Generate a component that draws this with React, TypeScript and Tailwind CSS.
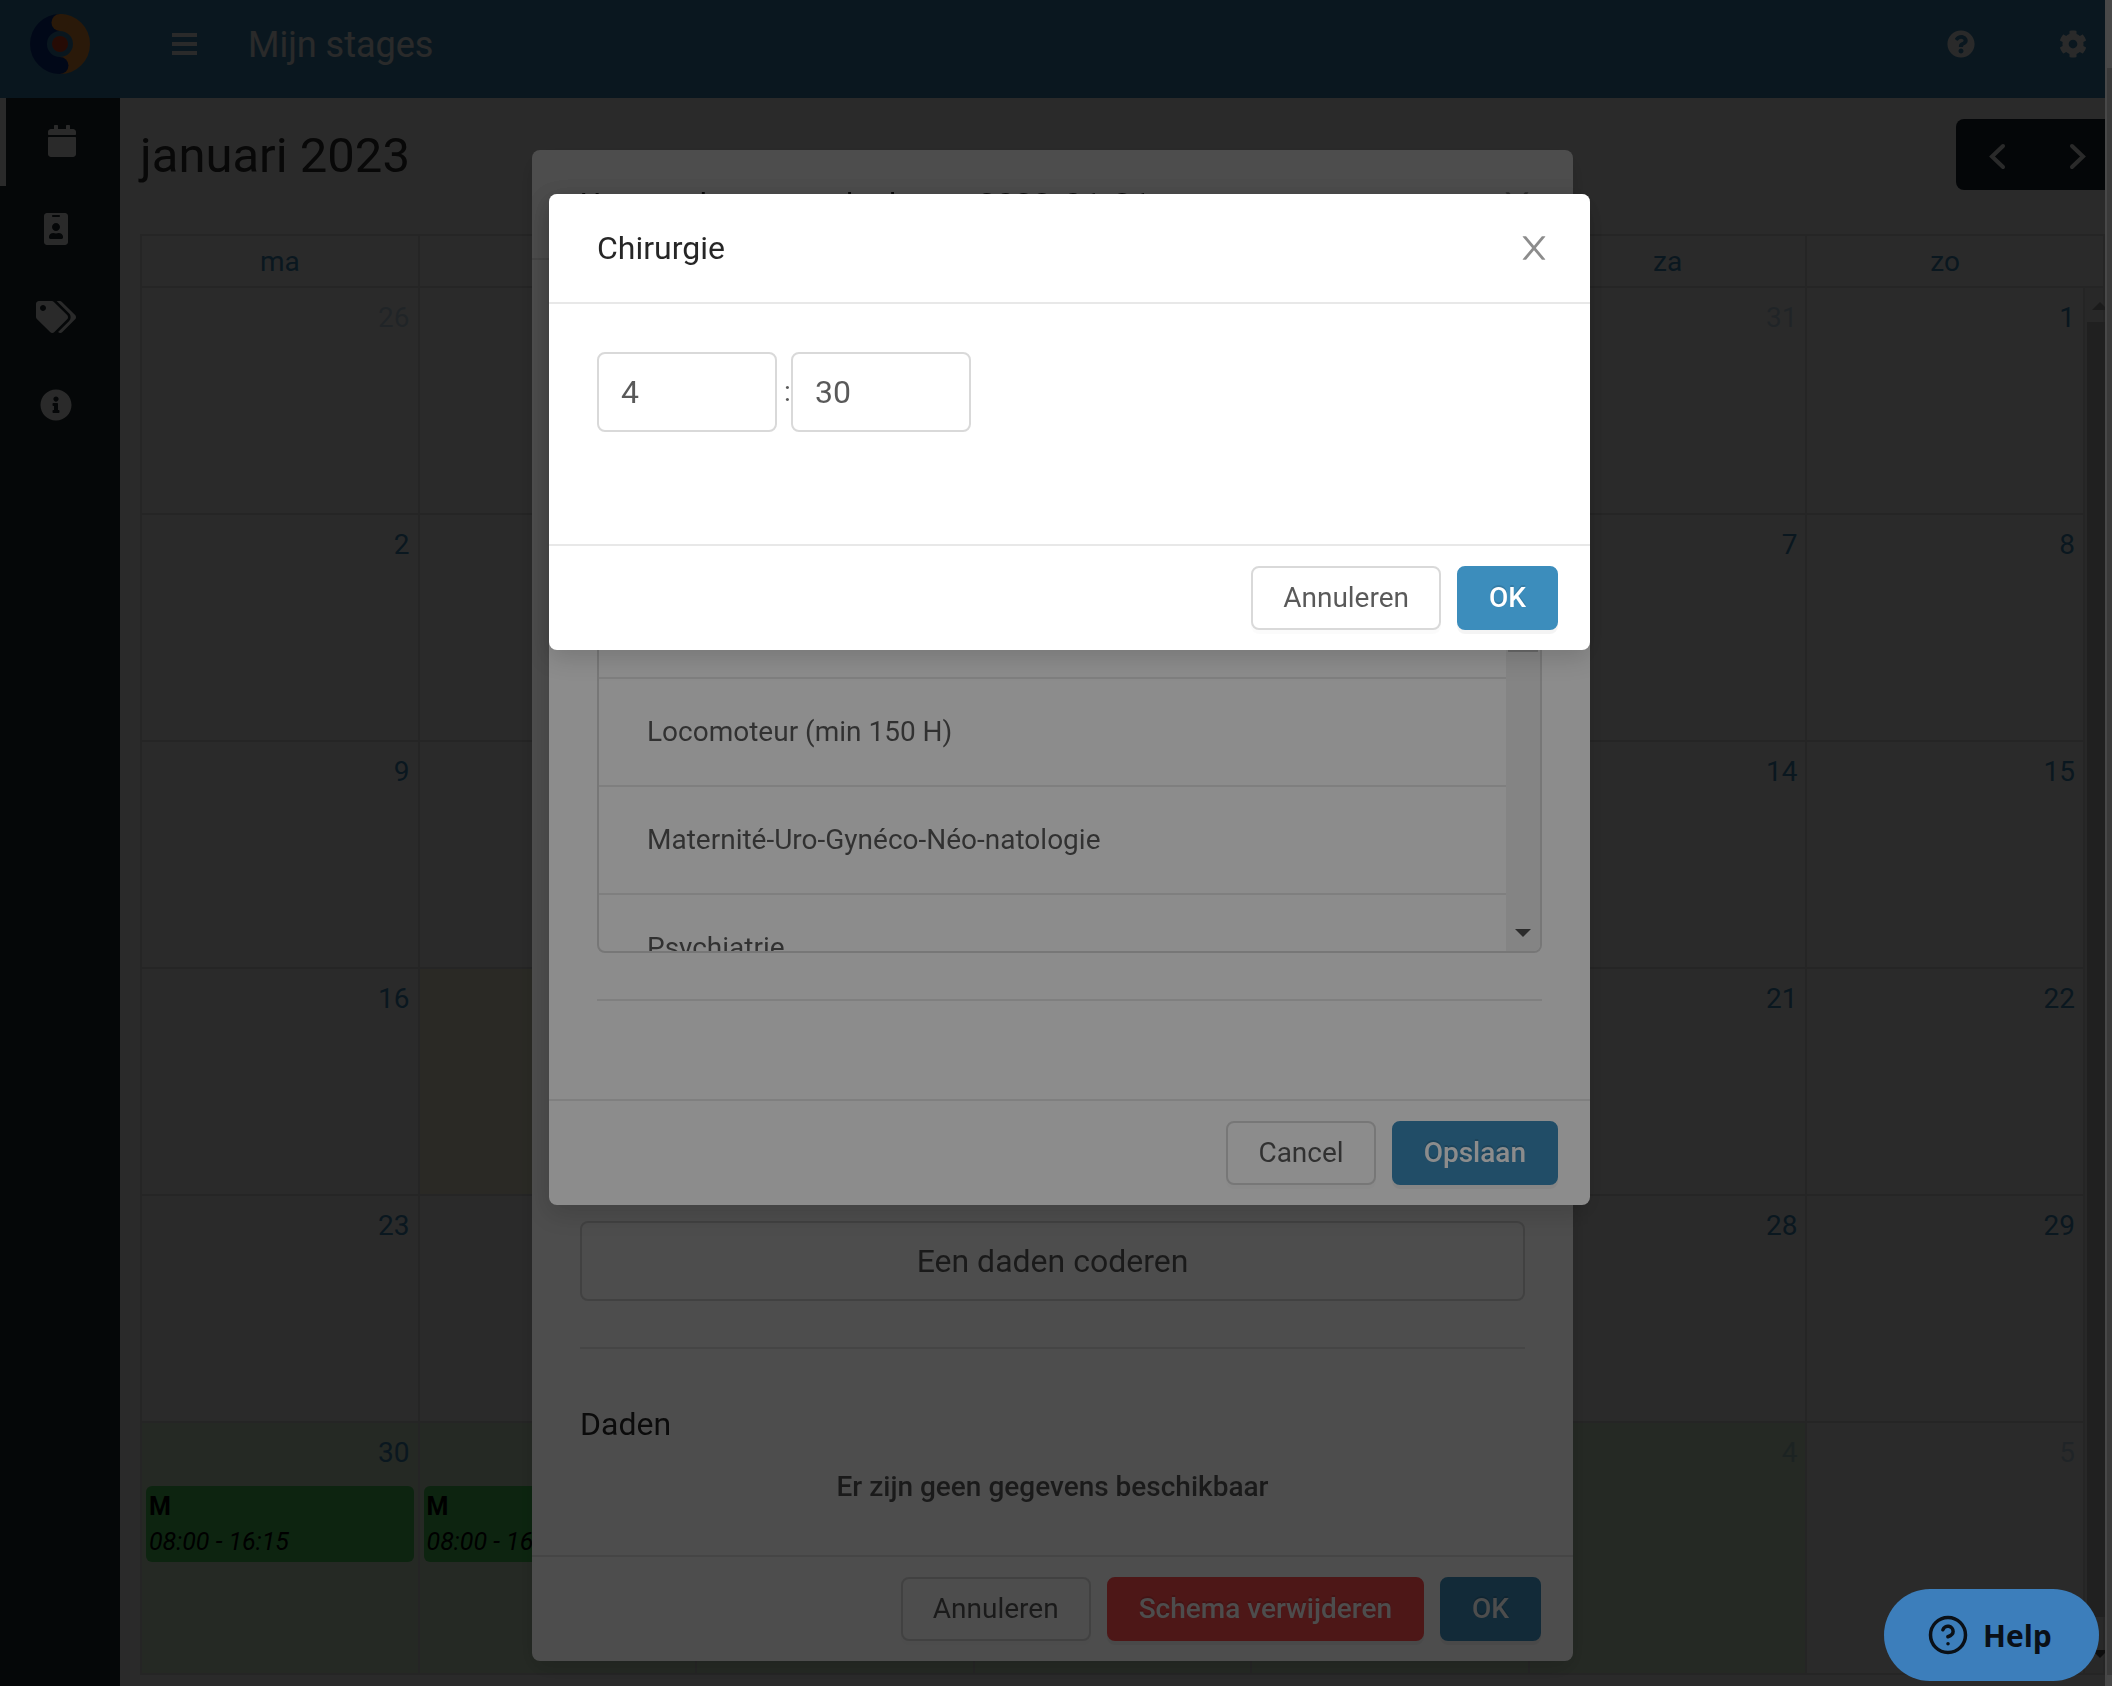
import React, { useState } from 'react';
import { FaCalendar, FaIdBadge, FaTags, FaInfoCircle, FaQuestionCircle, FaCog } from 'react-icons/fa';
import { HelpCircle } from 'lucide-react';

const weekDays = ['ma', 'di', 'wo', 'do', 'vr', 'za', 'zo'];

const weeks = [
  [26, 27, 28, 29, 30, 31, 1],
  [2, 3, 4, 5, 6, 7, 8],
  [9, 10, 11, 12, 13, 14, 15],
  [16, 17, 18, 19, 20, 21, 22],
  [23, 24, 25, 26, 27, 28, 29],
  [30, 31, 1, 2, 3, 4, 5],
];

const courses = ['Chirurgie', 'Gériatrie', 'Médecine', 'Locomoteur (min 150 H)', 'Maternité-Uro-Gynéco-Néo-natologie', 'Psychiatrie'];

const isOtherMonth = (week: number, day: number) =>
  (week === 0 && day < 6) || (week === 5 && day > 1);

const cellBackground = (week: number, day: number) => {
  if (week === 5 && day < 6) return 'bg-[#ddf5d9]';
  if (week === 3 && day === 1) return 'bg-[#fffadf]';
  return '';
};

const CloseIcon = () => (
  <svg viewBox="64 64 896 896" className="size-8" fill="currentColor" aria-hidden="true">
    <path d="M563.8 512l262.5-312.9c4.4-5.2.7-13.1-6.1-13.1h-79.8c-4.7 0-9.2 2.1-12.3 5.7L511.6 449.8 295.1 191.7c-3-3.6-7.5-5.7-12.3-5.7H203c-6.8 0-10.5 7.9-6.1 13.1L459.4 512 196.9 824.9A7.95 7.95 0 0 0 203 838h79.8c4.7 0 9.2-2.1 12.3-5.7l216.5-258.1 216.5 258.1c3 3.6 7.5 5.7 12.3 5.7h79.8c6.8 0 10.5-7.9 6.1-13.1L563.8 512z" />
  </svg>
);

const Logo = () => (
  <svg viewBox="0 0 60 60" className="size-[60px]" fill="none" aria-hidden="true">
    <path d="M30 8.500 A21.500 21.500 0 0 0 30 51.500" stroke="#0b3590" strokeWidth="17" />
    <path d="M30 8.500 A21.500 21.500 0 0 1 30 51.500" stroke="#ff9636" strokeWidth="17" />
    <circle cx="30" cy="8.500" r="8.500" fill="#ff9636" />
    <circle cx="30" cy="51.500" r="8.500" fill="#0b3590" />
    <circle cx="30" cy="30" r="8" fill="#e8451f" />
  </svg>
);

const MenuIcon = () => (
  <svg viewBox="0 0 25 22" className="h-[22px] w-[25px]" fill="currentColor" aria-hidden="true">
    <rect width="25" height="4" />
    <rect y="9" width="25" height="4" />
    <rect y="18" width="25" height="4" />
  </svg>
);

type ButtonProps = { children: React.ReactNode; variant?: 'default' | 'primary' | 'danger' };

const DialogButton = ({ children, variant = 'default' }: ButtonProps) => {
  const base = 'h-16 rounded-lg border-2 px-[30px] text-[28px] leading-[42px]';
  const styles = {
    default: 'border-[#d9d9d9] bg-white text-black/65 shadow-[0_4px_0_rgba(0,0,0,0.015)]',
    primary: 'border-[#3c8dbc] bg-[#3c8dbc] font-medium text-white shadow-[0_4px_0_rgba(0,0,0,0.045)] [text-shadow:0_-2px_0_rgba(0,0,0,0.12)]',
    danger: 'border-[#ff4d4f] bg-[#ff4d4f] font-medium text-white shadow-[0_4px_0_rgba(0,0,0,0.045)] [text-shadow:0_-2px_0_rgba(0,0,0,0.12)]',
  };
  return <button type="button" className={`${base} ${styles[variant]}`}>{children}</button>;
};

type DialogProps = {
  title: React.ReactNode;
  label: string;
  wrapClass: string;
  bodyClass?: string;
  footer: React.ReactNode;
  scrollbar?: boolean;
  children: React.ReactNode;
};

const Dialog = ({ title, label, wrapClass, bodyClass = '', footer, scrollbar = false, children }: DialogProps) => (
  <div className="fixed inset-0 flex overflow-hidden bg-black/45">
    <div className={`flex grow items-start justify-center ${wrapClass}`}>
      <section role="dialog" aria-label={label} className="w-[1041px] max-w-full rounded-lg bg-white shadow-[0_8px_24px_rgba(0,0,0,0.15)]">
        <header className="flex items-center justify-between border-b-2 border-[#e8e8e8] py-8 pl-12 pr-10">
          <h2 className="text-[32px] leading-[44px] text-black/85">{title}</h2>
          <button type="button" aria-label="Sluiten" className="text-black/45">
            <CloseIcon />
          </button>
        </header>
        <div className={`p-12 ${bodyClass}`}>{children}</div>
        <footer className="flex justify-end gap-4 border-t-2 border-[#e8e8e8] px-8 py-5">{footer}</footer>
      </section>
    </div>
    <div className="w-[7px] shrink-0">
      {scrollbar && (
        <div className="flex h-full bg-[#f1f1f1] pt-[68px] pb-[11px] pl-0.5">
          <div className="grow bg-[#c1c1c1]" />
        </div>
      )}
    </div>
  </div>
);

const Sidebar = () => (
  <aside className="flex w-[120px] shrink-0 flex-col bg-[#222d32]">
    <div className="flex h-[98px] items-center justify-center bg-[#3a88b6] pb-[10px]">
      <Logo />
    </div>
    <nav className="flex flex-col text-white">
      <a href="#kalender" aria-label="Kalender" className="flex h-[88px] border-l-[6px] border-white">
        <span className="flex w-28 shrink-0 justify-center pt-[27px]"><FaCalendar size={32} /></span>
      </a>
      <a href="#profiel" aria-label="Profiel" className="flex h-[88px]">
        <span className="flex w-28 justify-center pt-[27px]"><FaIdBadge size={32} /></span>
      </a>
      <a href="#labels" aria-label="Labels" className="flex h-[88px]">
        <span className="flex w-28 justify-center pt-[27px]"><FaTags size={40} className="h-8" /></span>
      </a>
      <a href="#info" aria-label="Info" className="flex h-[88px]">
        <span className="flex w-28 justify-center pt-[27px]"><FaInfoCircle size={32} /></span>
      </a>
    </nav>
  </aside>
);

const Calendar = () => (
  <div className="mt-[42px] ml-5">
    <table className="w-full table-fixed border-collapse border-2 border-[#ddd] text-[28px] text-[#3c8dbc]">
      <colgroup>
        {weekDays.map((day) => <col key={day} />)}
        <col className="w-[20px]" />
      </colgroup>
      <thead>
        <tr className="h-[52px]">
          {weekDays.map((day, i) => (
            <th key={day} colSpan={i === 6 ? 2 : 1} className={`border-2 border-[#ddd] p-0 pt-0.5 font-normal ${i === 6 ? 'border-r-0 pr-5' : ''}`}>{day}</th>
          ))}
        </tr>
      </thead>
      <tbody>
        {weeks.map((week, w) => (
          <tr key={w} className={w === 5 ? 'h-[252px]' : 'h-[227px]'}>
            {week.map((day, d) => (
              <td key={d} className={`border-2 border-[#ddd] p-0 align-top ${cellBackground(w, d)}`}>
                <div className={`pt-[9px] pr-2 text-right leading-[42px] ${isOtherMonth(w, d) ? 'opacity-30' : ''}`}>{day}</div>
                {w === 5 && d < 5 && (
                  <div className="mx-1 mt-3 h-[76px] rounded-md bg-[#4edc60] px-[3px] pt-[3px] text-[25px] leading-[35px] text-black">
                    <div className="font-bold">M</div>
                    <div className="italic">08:00 - 16:15</div>
                  </div>
                )}
              </td>
            ))}
            {w === 0 && (
              <td rowSpan={6} className="h-px p-0">
                <div className="flex h-full w-[30px] flex-col justify-between bg-[#f1f1f1]">
                  <svg viewBox="0 0 30 34" className="h-[34px] w-[30px]"><path d="M7 22 L15 14 L23 22Z" fill="#a3a3a3" /></svg>
                  <div className="ml-0.5 w-[26px] grow bg-[#c1c1c1]" />
                  <svg viewBox="0 0 30 56" className="h-14 w-[30px]"><path d="M7 33 L15 41 L23 33Z" fill="#505050" /></svg>
                </div>
              </td>
            )}
          </tr>
        ))}
      </tbody>
    </table>
  </div>
);

const Index = () => {
  const [hours, setHours] = useState('4');
  const [minutes, setMinutes] = useState('30');

  return (
    <div className="min-h-screen overflow-hidden bg-white font-['Roboto',sans-serif]">
      <div className="flex min-h-screen pr-[7px]">
        <Sidebar />
        <div className="flex min-w-0 grow flex-col overflow-hidden">
          <header className="flex h-[98px] items-center bg-[#3c8dbc] pb-[10px] text-white">
            <button type="button" aria-label="Menu" className="ml-[52px]"><MenuIcon /></button>
            <h1 className="ml-[51px] grow pt-0.5 text-[36px]">Mijn stages</h1>
            <button type="button" aria-label="Help" className="mr-[84px]"><FaQuestionCircle size={28} /></button>
            <button type="button" aria-label="Instellingen" className="mr-[18px]"><FaCog size={28} /></button>
          </header>
          <main className="grow">
            <div className="flex items-start justify-between pt-[21px] pl-5">
              <h2 className="text-[49px] leading-[73px] text-[#333]">januari 2023</h2>
              <div className="-mr-[14px] flex h-[71px] overflow-hidden rounded-lg bg-[#1a2632] text-white">
                <button type="button" aria-label="Vorige" className="w-[82px]">
                  <svg viewBox="0 0 82 71" className="h-[71px]" fill="none" stroke="currentColor" strokeWidth="4" strokeLinecap="round"><path d="M47 27 L36 37.500 L47 48" /></svg>
                </button>
                <button type="button" aria-label="Volgende" className="w-[81px]">
                  <svg viewBox="0 0 81 71" className="h-[71px]" fill="none" stroke="currentColor" strokeWidth="4" strokeLinecap="round"><path d="M34 27 L45 37.500 L34 48" /></svg>
                </button>
              </div>
            </div>
            <Calendar />
          </main>
        </div>
      </div>

      <Dialog
        title={<>Uren coderen van de datum <b className="font-bold">2023-01-31</b></>}
        label="Uren coderen"
        wrapClass="pt-[150px]"
        scrollbar
        footer={
          <>
            <DialogButton>Annuleren</DialogButton>
            <DialogButton variant="danger">Schema verwijderen</DialogButton>
            <DialogButton variant="primary">OK</DialogButton>
          </>
        }
      >
        <div className="flex h-[993px] flex-col justify-end">
          <button type="button" className="h-20 rounded-lg border-2 border-[#d9d9d9] text-[32px] text-black/65">Een daden coderen</button>
        </div>
        <hr className="mt-[46px] border-t-2 border-[#e8e8e8]" />
        <h3 className="mt-12 text-[32px] leading-[54px] text-black/85">Daden</h3>
        <p className="mt-4 text-center text-[28px] leading-10 font-medium text-black/65">Er zijn geen gegevens beschikbaar</p>
      </Dialog>

      <Dialog
        title="Daden"
        label="Daden"
        wrapClass="pt-[194px] pl-[34px]"
        footer={
          <>
            <DialogButton>Cancel</DialogButton>
            <DialogButton variant="primary">Opslaan</DialogButton>
          </>
        }
      >
        <div className="flex h-[601px] overflow-hidden rounded-lg border-2 border-[#d9d9d9]">
          <ul className="grow pt-px text-[28px] text-black/65">
            {courses.map((course) => (
              <li key={course} className="flex h-[108px] items-center border-b-2 border-[#e8e8e8] px-12">{course}</li>
            ))}
          </ul>
          <div className="flex w-[34px] flex-col justify-between bg-[#f1f1f1] px-0.5">
            <div className="mt-[34px] h-[264px] bg-[#c1c1c1]" />
            <svg viewBox="0 0 30 34" className="h-[34px] w-[30px]"><path d="M7 12 L15 20 L23 12Z" fill="#505050" /></svg>
          </div>
        </div>
        <hr className="mt-[46px] mb-[50px] border-t-2 border-[#e8e8e8]" />
      </Dialog>

      <Dialog
        title="Chirurgie"
        label="Chirurgie"
        wrapClass="pt-[194px] pl-[34px]"
        bodyClass="h-60"
        footer={
          <>
            <DialogButton>Annuleren</DialogButton>
            <DialogButton variant="primary">OK</DialogButton>
          </>
        }
      >
        <div className="flex items-center text-[28px] text-black/65">
          <input
            aria-label="Uren"
            value={hours}
            onChange={(e) => setHours(e.target.value)}
            className="h-20 w-[180px] rounded-lg border-2 border-[#d9d9d9] px-[22px] text-[32px]"
          />
          <span className="w-[14px] pl-[7px]">:</span>
          <input
            aria-label="Minuten"
            value={minutes}
            onChange={(e) => setMinutes(e.target.value)}
            className="h-20 w-[180px] rounded-lg border-2 border-[#d9d9d9] px-[22px] text-[32px]"
          />
        </div>
      </Dialog>

      <button type="button" className="fixed right-[13px] bottom-[5px] flex h-[92px] w-[215px] items-center gap-[14px] rounded-full bg-[#3c7ebb] pl-[43px] font-['Open_Sans','Noto_Sans',sans-serif] text-[30px] font-bold text-[#0a1017]">
        <HelpCircle size={42} strokeWidth={2} />
        Help
      </button>
    </div>
  );
};

export default Index;
